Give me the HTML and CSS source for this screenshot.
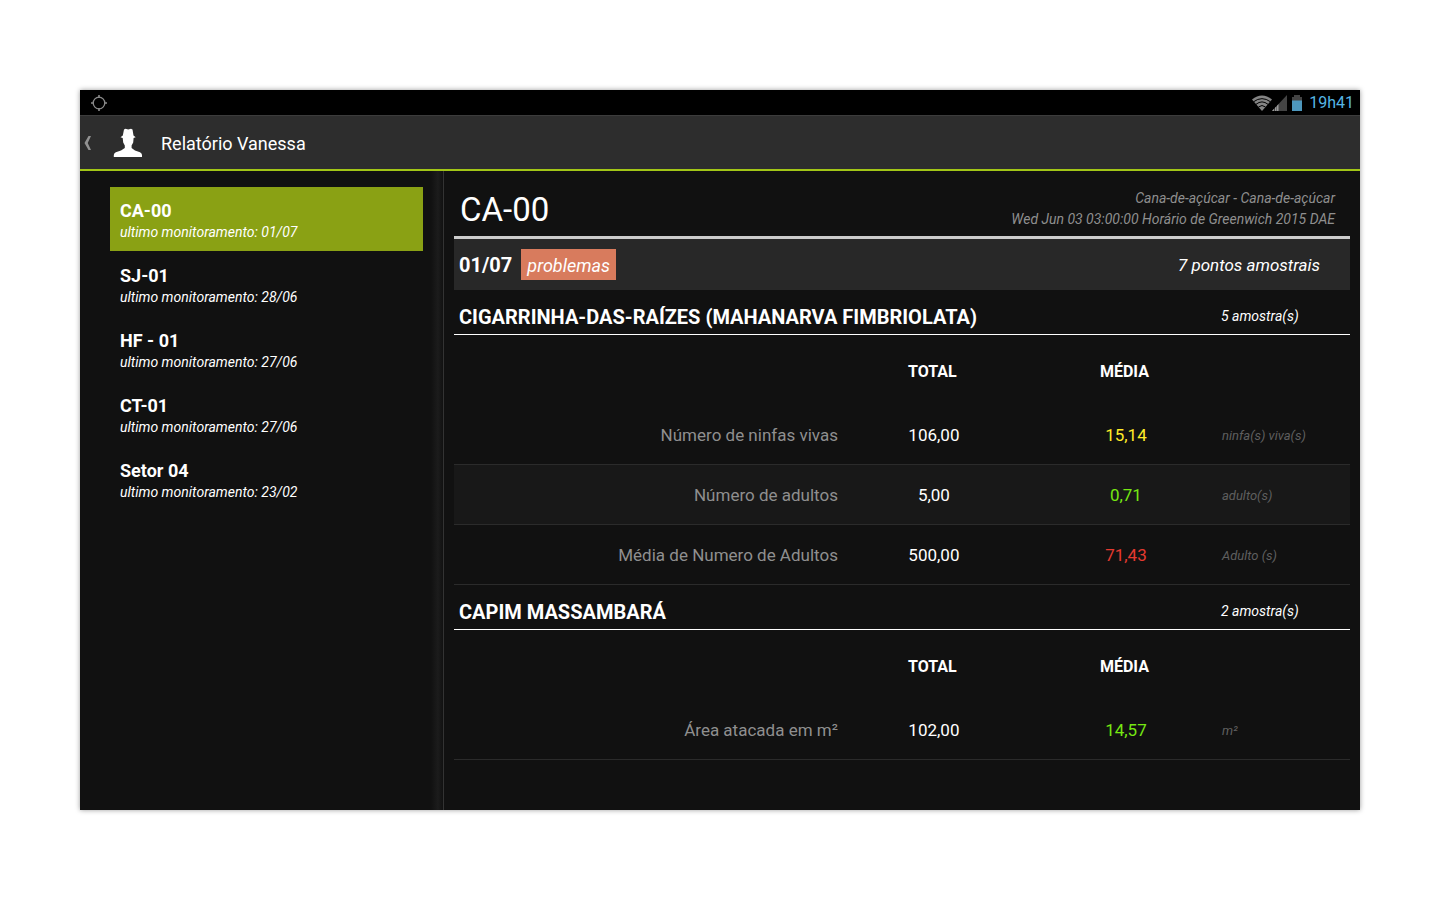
FILE: index.html
```html
<!DOCTYPE html>
<html lang="pt-BR">
<head>
<meta charset="utf-8">
<meta name="viewport" content="width=device-width, initial-scale=1">
<title>Relatório Vanessa</title>
<link rel="stylesheet" href="styles.css">
</head>
<body>
<div class="screen">
  <div class="status-bar">
    <svg class="gps" width="18" height="18" viewBox="0 0 18 18" fill="none" stroke="#8a8a8a"><circle cx="9" cy="9" r="5.8" stroke-width="1.3"/><path d="M9 1v3M9 14v3M1 9h3M14 9h3" stroke-width="1.6"/></svg>
    <div class="indicators">
      <svg width="20" height="16" viewBox="0 0 20 16"><path d="M0 4.500Q10-3.500 20 4.500L10 16z" fill="#858585"/><path d="M1.500 6.800Q10 .500 18.500 6.800M4 9.300Q10 4.500 16 9.300M6.500 12Q10 9 13.500 12" fill="none" stroke="#000" stroke-width="1"/></svg>
      <svg width="15" height="16" viewBox="0 0 15 16"><path d="M15 0v16H0z" fill="#444"/><path d="M0 16l2-2.200V16zM3 16v-3.200l1.500-1.600V16zM5 16v-5.300l1.500-1.600V16z" fill="#999"/></svg>
      <svg class="battery" width="10" height="16" viewBox="0 0 10 16"><path d="M0 2h2V0h6v2h2v4H0z" fill="#444"/><path d="M0 5.500h10V16H0z" fill="#4d97bd"/></svg>
      <span class="clock">19h41</span>
    </div>
  </div>
  <header class="app-bar">
    <button class="back" type="button" aria-label="Voltar">
      <svg width="8" height="14" viewBox="0 0 8 14"><path d="M4.500 0H7L3.700 7 7 14H4.500L.500 7z" fill="#929292"/></svg>
    </button>
    <svg class="person" width="30" height="30" viewBox="0 0 30 30"><path d="M11 1.500L12.500 .800L15.200 1.500L18 .800L19.500 1.500L20.500 7.500L22.700 9.300L20.600 10L20.200 14.500L18.600 17.500V20L22 22.500L27 24.300Q29 25.200 29 27V29H.800V27Q.800 25.200 2.800 24.300L8 22.500L11.800 20V17.500L10.200 14.500L9.700 10L7.500 9.300L9.800 7.500Z" fill="#fff"/></svg>
    <h1 class="app-title">Relatório Vanessa</h1>
  </header>
  <div class="body">
    <nav class="sidebar">
      <ul class="areas">
        <li><button class="area active" type="button"><b>CA-00</b><i>ultimo monitoramento: 01/07</i></button></li>
        <li><button class="area" type="button"><b>SJ-01</b><i>ultimo monitoramento: 28/06</i></button></li>
        <li><button class="area" type="button"><b>HF - 01</b><i>ultimo monitoramento: 27/06</i></button></li>
        <li><button class="area" type="button"><b>CT-01</b><i>ultimo monitoramento: 27/06</i></button></li>
        <li><button class="area" type="button"><b>Setor 04</b><i>ultimo monitoramento: 23/02</i></button></li>
      </ul>
    </nav>
    <main class="report">
      <div class="report-head">
        <h2 class="report-title">CA-00</h2>
        <p class="report-info">Cana-de-açúcar - Cana-de-açúcar<br>Wed Jun 03 03:00:00 Horário de Greenwich 2015 DAE</p>
      </div>
      <div class="day">
        <b class="date">01/07</b>
        <span class="tag">problemas</span>
        <span class="points">7 pontos amostrais</span>
      </div>
      <section>
        <div class="pest"><h3>CIGARRINHA-DAS-RAÍZES (MAHANARVA FIMBRIOLATA)</h3><span class="samples">5 amostra(s)</span></div>
        <table class="data">
          <colgroup><col class="c-label"><col class="c-value"><col class="c-value"><col></colgroup>
          <thead><tr><td></td><th>TOTAL</th><th>MÉDIA</th><td></td></tr></thead>
          <tbody>
            <tr><th class="label">Número de ninfas vivas</th><td>106,00</td><td class="warn">15,14</td><td class="unit">ninfa(s) viva(s)</td></tr>
            <tr><th class="label">Número de adultos</th><td>5,00</td><td class="good">0,71</td><td class="unit">adulto(s)</td></tr>
            <tr><th class="label">Média de Numero de Adultos</th><td>500,00</td><td class="bad">71,43</td><td class="unit">Adulto (s)</td></tr>
          </tbody>
        </table>
      </section>
      <section>
        <div class="pest"><h3>CAPIM MASSAMBARÁ</h3><span class="samples">2 amostra(s)</span></div>
        <table class="data">
          <colgroup><col class="c-label"><col class="c-value"><col class="c-value"><col></colgroup>
          <thead><tr><td></td><th>TOTAL</th><th>MÉDIA</th><td></td></tr></thead>
          <tbody>
            <tr><th class="label">Área atacada em m²</th><td>102,00</td><td class="good">14,57</td><td class="unit">m²</td></tr>
          </tbody>
        </table>
      </section>
    </main>
  </div>
</div>
</body>
</html>
```
FILE: styles.css
```css
* { box-sizing: border-box; }
body { margin: 0; min-height: 100vh; padding: 90px 80px; display: flex; background: #fff; font-family: Roboto, sans-serif; color: #fff; }
h1, h2, h3, p, ul { margin: 0; padding: 0; }
button { font: inherit; color: inherit; background: none; border: 0; padding: 0; }
svg { display: block; }
.screen { flex: 1; min-width: 0; display: flex; flex-direction: column; background: #111; box-shadow: 0 0 5px rgba(0, 0, 0, .4); }

.status-bar { height: 25px; padding: 0 6px 0 10px; display: flex; align-items: center; justify-content: space-between; background: #000; }
.indicators { display: flex; align-items: center; }
.battery { margin: 0 7px 0 5px; }
.clock { font-size: 16px; line-height: 24px; color: #56b6e4; }

.app-bar { height: 56px; display: flex; align-items: center; background: #2d2d2d; border-top: 1px solid #3c3c3c; border-bottom: 2px solid #a2c617; }
.back { padding: 0 4px; }
.person { margin: 0 18px 0 17px; }
.app-title { padding-top: 2px; font-size: 18px; font-weight: 400; }

.body { flex: 1; display: flex; }
.sidebar { width: 364px; padding: 16px 20px 16px 30px; border-right: 1px solid #333; background: linear-gradient(to left, #111, #1c1c1c 5px, #111 12px); }
.areas { list-style: none; }
.area { width: 100%; height: 64px; margin-bottom: 1px; padding: 4px 10px 0; display: flex; flex-direction: column; justify-content: center; text-align: left; }
.area.active { background: #8aa114; }
.area b { font-size: 18px; line-height: 22px; }
.area i { font-size: 14px; line-height: 20px; }

.report { flex: 1; min-width: 0; padding: 0 10px; }
.report-head { height: 68px; padding: 12px 15px 0 6px; display: flex; align-items: center; justify-content: space-between; border-bottom: 3px solid #ccc; }
.report-title { font-size: 33px; font-weight: 400; }
.report-info { padding-bottom: 2px; font-size: 14px; line-height: 21px; font-style: italic; text-align: right; color: #8f8f8f; }
.day { height: 51px; padding: 0 30px 0 5px; display: flex; align-items: center; background: #282828; }
.date { font-size: 20px; }
.tag { margin-left: 9px; padding: 5px 6px 2px; font-size: 18px; line-height: 24px; font-style: italic; background: #d87b5d; }
.points { margin-left: auto; font-size: 17px; font-style: italic; }
.pest { height: 45px; padding: 8px 0 0 5px; display: grid; grid-template-columns: 1fr 129px; align-items: center; border-bottom: 1px solid #fff; }
.pest h3 { padding-top: 2px; font-size: 20px; }
.samples { font-size: 14px; font-style: italic; }

.data { width: 100%; table-layout: fixed; border-collapse: separate; border-spacing: 0; font-size: 17px; }
.c-label { width: 42.85%; }
.c-value { width: 21.43%; }
.data td, .data th { padding: 0; text-align: center; }
.data thead tr { height: 70px; }
.data thead th { font-size: 16px; padding: 2px 3px 0 0; }
.data tbody tr { height: 60px; }
.data tbody td, .data tbody th { border-bottom: 1px solid #2b2b2b; }
.data tbody tr:nth-child(even) { background: #181818; }
.data tbody .label { font-weight: 400; text-align: right; color: #8f8f8f; }
.data tbody .unit { padding-top: 2px; font-size: 13px; font-style: italic; text-align: left; color: #5f5f5f; }
.warn { color: #ffeb28; }
.good { color: #76e712; }
.bad { color: #e53a30; }
```
